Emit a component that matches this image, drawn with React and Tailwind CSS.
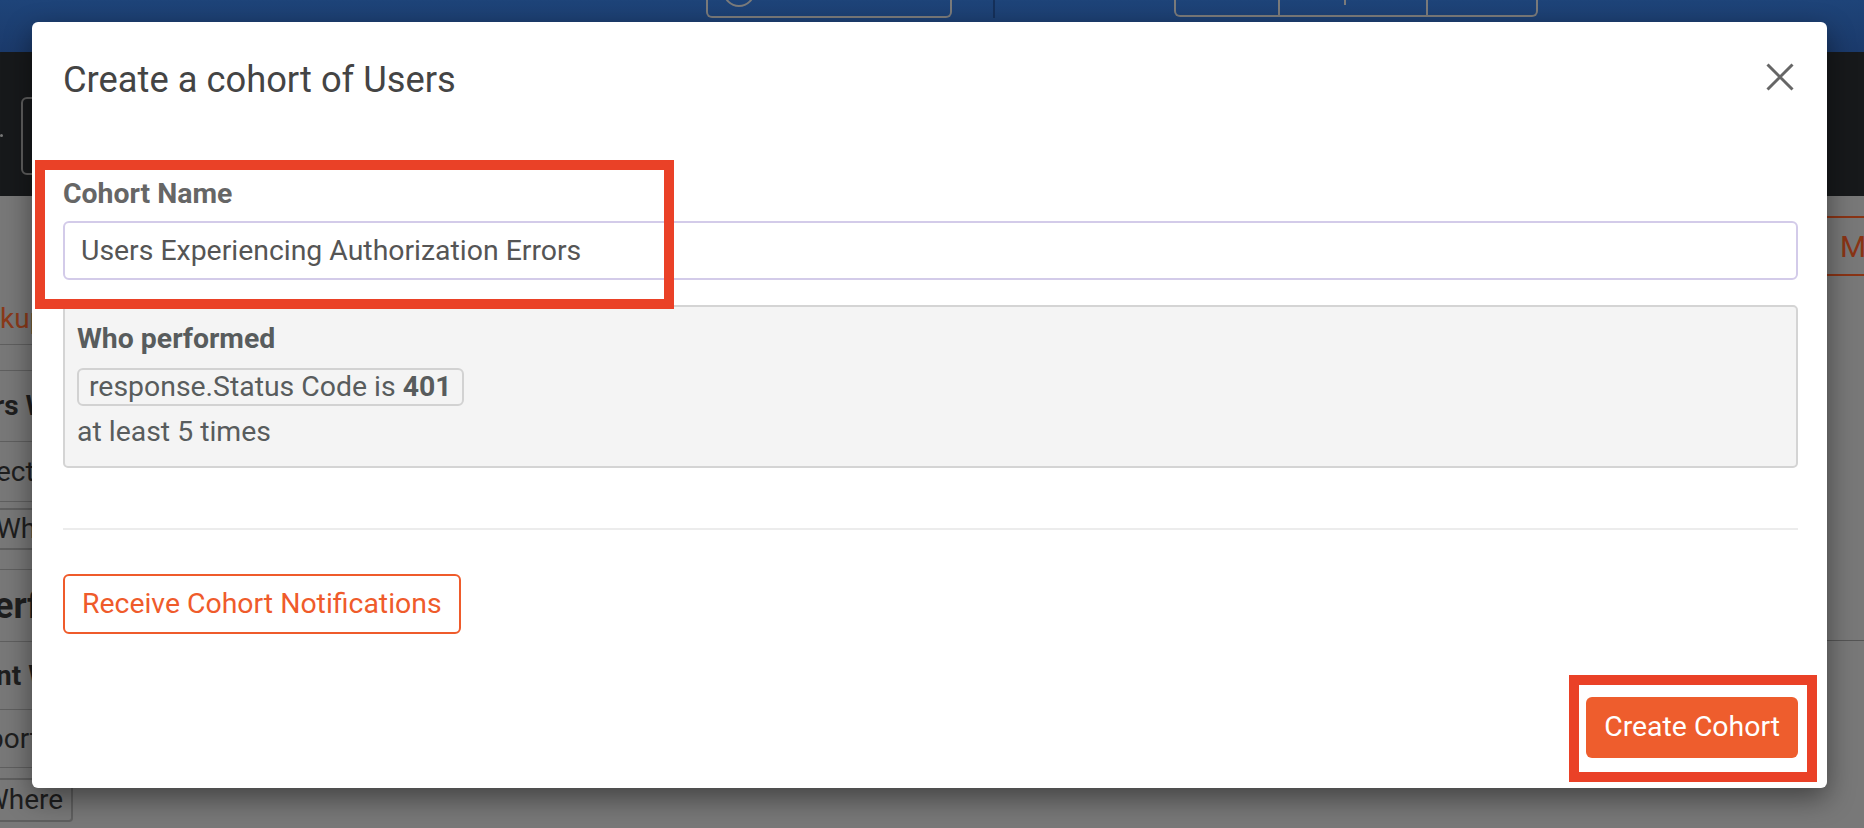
import React from "react";

const CloseIcon = () => (
  <svg width="28" height="28" viewBox="0 0 28 28" fill="none" stroke="#666" strokeWidth="3">
    <path d="M1.5 1.5l25 25M26.5 1.5l-25 25" />
  </svg>
);

const HeaderBar = () => (
  <div className="h-[52px] bg-gradient-to-b from-[#1e4479] to-[#1b3a6b] flex items-start">
    <div className="ml-[706px] w-[246px] h-[18px] border-2 border-t-0 border-[#7b7b7b] rounded-b-[6px]">
      <svg width="242" height="16" viewBox="0 0 242 16" fill="none">
        <circle cx="31" cy="-9" r="15" stroke="#7b7b7b" strokeWidth="2" />
      </svg>
    </div>
    <div className="ml-[41px] w-[2px] h-[18px] bg-[#15305a]" />
    <div className="ml-[179px] w-[364px] h-[17px] border-2 border-t-0 border-[#7b7b7b] rounded-b-[6px] flex">
      <div className="w-[104px] h-full border-r-2 border-[#7b7b7b]" />
      <div className="w-[148px] h-full border-r-2 border-[#7b7b7b] relative">
        <div className="absolute left-[64px] top-0 w-[2px] h-[5px] bg-[#7b7b7b]" />
      </div>
      <div className="flex-1" />
    </div>
  </div>
);

const ToolBar = () => (
  <div className="h-[144px] bg-[#17191b] flex items-start">
    <div className="mt-[82px] w-[3px] h-[3px] rounded-full bg-[#777]" />
    <div className="ml-[18px] mt-[45px] w-[220px] h-[78px] border-2 border-[#5e5e5e] rounded-[6px]" />
  </div>
);

const PageBehind = () => (
  <div className="flex-1 bg-[#787878] flex justify-between text-[28px] text-[#1e1e1e]">
    <div className="w-[120px] flex flex-col">
      <div className="h-[149px] flex items-end pb-[9px] border-b border-[#5f5f5f] text-[#8a3a1a]">
        <span className="leading-[33px]">kup</span>
      </div>
      <div className="h-[26px] border-b border-[#5f5f5f]" />
      <div className="h-[71px] flex items-center border-b border-[#5f5f5f] font-bold -ml-[6px]">
        rs Who
      </div>
      <div className="h-[60px] flex items-center border-b border-[#5f5f5f] -ml-[4px]">
        ect
      </div>
      <div className="h-[53px] flex items-center">
        <span className="-ml-[14px] px-[8px] leading-[38px] border-2 border-[#5f5f5f] rounded-[4px]">Where</span>
      </div>
      <div className="h-[15px] border-b border-[#5f5f5f]" />
      <div className="h-[72px] flex items-center border-b border-[#5f5f5f] font-bold text-[36px] -ml-[6px]">
        erf
      </div>
      <div className="h-[68px] flex items-center border-b border-[#5f5f5f] font-bold -ml-[4px]">
        nt Wh
      </div>
      <div className="h-[58px] flex items-center border-b border-[#5f5f5f] -ml-[12px]">
        port
      </div>
      <div className="h-[54px] flex items-end">
        <span className="-ml-[26px] px-[8px] leading-[40px] border-2 border-[#5f5f5f] rounded-[4px]">Where</span>
      </div>
    </div>
    <div className="w-[120px] flex flex-col items-end">
      <div className="mt-[20px] w-[120px] h-[60px] border-y-2 border-[#8a3415] flex items-center pl-[96px] text-[#8a3415] text-[30px]">
        M
      </div>
      <div className="mt-[364px] w-full h-[1px] bg-[#555]" />
    </div>
  </div>
);

export default function App() {
  return (
    <div className="relative w-full h-[828px] overflow-hidden font-['Roboto','Liberation_Sans',sans-serif]">
      <div className="h-full flex flex-col">
        <HeaderBar />
        <ToolBar />
        <PageBehind />
      </div>

      <div className="absolute left-[32px] top-[22px] w-[1795px] h-[766px] bg-white rounded-[6px] shadow-[0_10px_28px_rgba(0,0,0,0.45)] pl-[31px] pr-[29px] pt-[37px] flex flex-col">
        <div className="h-[42px] flex items-start justify-between">
          <h2 className="text-[36.3px] leading-[42px] text-[#444]">Create a cohort of Users</h2>
          <button className="mt-[4px] mr-[4px]">
            <CloseIcon />
          </button>
        </div>

        <label className="mt-[76px] block text-[28.4px] leading-[33px] font-bold text-[#666]">
          Cohort Name
        </label>
        <input
          readOnly
          value="Users Experiencing Authorization Errors"
          className="mt-[11px] h-[59px] w-full border-2 border-[#d3cbe9] rounded-[6px] px-[16px] text-[28.4px] text-[#555] outline-none"
        />

        <div className="mt-[25px] h-[163px] bg-[#f4f4f4] border-2 border-[#d4d4d4] rounded-[5px] px-[12px] pt-[12px] flex flex-col items-start text-[28.4px] text-[#585c5d]">
          <div className="leading-[40px] font-bold">Who performed</div>
          <div className="mt-[9px] h-[38px] px-[10px] border-2 border-[#d2d2d2] rounded-[6px] leading-[34px]">
            response.Status Code is <span className="font-bold">401</span>
          </div>
          <div className="mt-[6px] leading-[40px]">at least 5 times</div>
        </div>

        <div className="mt-[60px] h-[2px] bg-[#ececec]" />

        <button className="mt-[44px] self-start h-[60px] px-[17px] border-2 border-[#ef5b2b] rounded-[6px] text-[28.4px] text-[#ef5b2b]">
          Receive Cohort Notifications
        </button>

        <button className="mt-[63px] self-end h-[61px] px-[18px] bg-[#ee5d2d] rounded-[6px] text-[28.4px] text-white">
          Create Cohort
        </button>

        <div className="absolute left-[3px] top-[138px] w-[639px] h-[149px] border-[10px] border-[#ea4127]" />
        <div className="absolute left-[1537px] top-[653px] w-[248px] h-[107px] border-[10px] border-[#ea4127]" />
      </div>
    </div>
  );
}
